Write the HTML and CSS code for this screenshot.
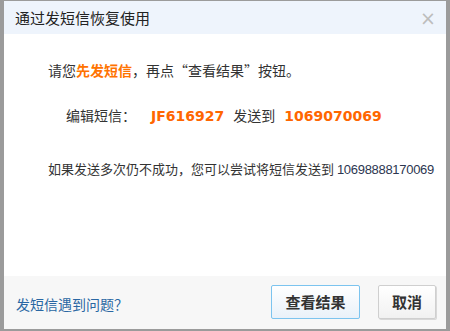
FILE: index.html
```html
<!DOCTYPE html>
<html lang="zh-CN">
<head>
<meta charset="utf-8">
<title>通过发短信恢复使用</title>
<link rel="stylesheet" href="styles.css">
</head>
<body>
<div class="dialog">
  <div class="header">
    <span class="title">通过发短信恢复使用</span>
    <span class="close">×</span>
  </div>
  <div class="content">
    <p class="line1">请您<b class="hl">先发短信</b>，再点“查看结果”按钮。</p>
    <p class="line2">编辑短信：<b class="code">JF616927</b><span class="send">发送到</span><b class="code num">1069070069</b></p>
    <p class="line3">如果发送多次仍不成功，您可以尝试将短信发送到 <span class="alt">10698888170069</span></p>
  </div>
  <div class="footer">
    <a class="help" href="#">发短信遇到问题？</a>
    <div class="actions">
      <button class="btn primary">查看结果</button>
      <button class="btn">取消</button>
    </div>
  </div>
</div>
</body>
</html>
```

FILE: styles.css
```css
html, body {
  margin: 0;
  padding: 0;
  background: #9b9b9b;
  height: 100%;
  overflow: hidden;
}
body {
  font-family: "Noto Sans CJK SC", "Liberation Sans", sans-serif;
  color: #333;
}
.dialog {
  margin: 1px 4px 0 4px;
  height: 328px;
  background: #fff;
  display: flex;
  flex-direction: column;
}
.header {
  height: 33px;
  background: #eef4fc;
  display: flex;
  align-items: center;
  justify-content: space-between;
  padding: 0 10px 0 11px;
}
.title {
  font-size: 15px;
  color: #222;
  line-height: 20px;
}
.close {
  font-family: "DejaVu Sans", sans-serif;
  font-size: 19px;
  color: #bdbdbd;
  line-height: 18px;
  margin-top: 1px;
}
.content {
  flex: 1;
  padding: 26px 0 0 44px;
}
.content p {
  margin: 0;
}
.line1 {
  font-size: 14px;
  line-height: 20px;
}
.hl {
  color: #ff7300;
  font-weight: bold;
}
.line2 {
  font-size: 14px;
  line-height: 20px;
  margin-top: 25px !important;
  padding-left: 18px;
}
.code {
  font-family: "DejaVu Sans", sans-serif;
  font-weight: bold;
  color: #ff6600;
  font-size: 14px;
  margin-left: 15px;
}
.send {
  margin-left: 9px;
  margin-right: 9px;
}
.code.num {
  margin-left: 0;
}
.line3 {
  font-size: 13px;
  line-height: 18px;
  margin-top: 34px !important;
}
.alt {
  font-family: "Liberation Sans", sans-serif;
  font-size: 13px;
  letter-spacing: -0.3px;
  color: #2c3650;
}
.footer {
  height: 53px;
  background: #f7f7f7;
  display: flex;
  align-items: flex-start;
  justify-content: space-between;
  padding: 9px 10px 0 12px;
  box-sizing: border-box;
}
.help {
  font-size: 14px;
  color: #2a67a3;
  text-decoration: none;
  line-height: 20px;
  margin-top: 9px;
}
.actions {
  display: flex;
  gap: 18px;
}
.btn {
  font-family: "Noto Sans CJK SC", sans-serif;
  font-size: 15px;
  font-weight: bold;
  color: #333;
  height: 34px;
  padding: 0 13px;
  border: 1px solid #cfcfcf;
  border-radius: 2px;
  background: linear-gradient(#ffffff, #f1f1f1);
  box-shadow: 1px 1px 0 #d8d8d8;
  line-height: 32px;
}
.btn.primary {
  width: 89px;
  padding: 0;
  border-color: #7cc4ef;
  background: linear-gradient(#ffffff, #e9f1f9);
  box-shadow: none;
}
```
